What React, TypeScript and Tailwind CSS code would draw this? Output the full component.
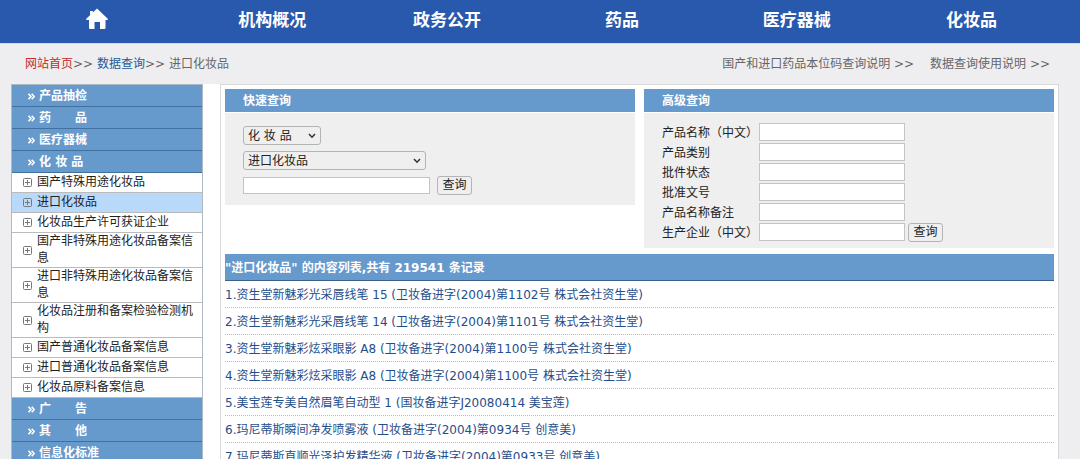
import React from 'react';

const navItems = ['机构概况', '政务公开', '药品', '医疗器械', '化妆品'];

const topGroups = ['产品抽检', '药\u3000\u3000品', '医疗器械', '化 妆 品'];
const bottomGroups = ['广\u3000\u3000告', '其\u3000\u3000他', '信息化标准'];

const categories = [
  '国产特殊用途化妆品',
  '进口化妆品',
  '化妆品生产许可获证企业',
  '国产非特殊用途化妆品备案信息',
  '进口非特殊用途化妆品备案信息',
  '化妆品注册和备案检验检测机构',
  '国产普通化妆品备案信息',
  '进口普通化妆品备案信息',
  '化妆品原料备案信息',
];

const advancedFields = [
  { id: 'name', label: '产品名称（中文）' },
  { id: 'type', label: '产品类别' },
  { id: 'status', label: '批件状态' },
  { id: 'number', label: '批准文号' },
  { id: 'remark', label: '产品名称备注' },
  { id: 'company', label: '生产企业（中文）' },
];

const records = [
  '资生堂新魅彩光采唇线笔 15 (卫妆备进字(2004)第1102号 株式会社资生堂)',
  '资生堂新魅彩光采唇线笔 14 (卫妆备进字(2004)第1101号 株式会社资生堂)',
  '资生堂新魅彩炫采眼影 A8 (卫妆备进字(2004)第1100号 株式会社资生堂)',
  '资生堂新魅彩炫采眼影 A8 (卫妆备进字(2004)第1100号 株式会社资生堂)',
  '美宝莲专美自然眉笔自动型 1 (国妆备进字J20080414 美宝莲)',
  '玛尼蒂斯瞬间净发喷雾液 (卫妆备进字(2004)第0934号 创意美)',
  '玛尼蒂斯直顺光泽护发精华液 (卫妆备进字(2004)第0933号 创意美)',
];

function HomeIcon() {
  return (
    <svg className="w-[22px] h-[22px]" viewBox="0 0 22 22" fill="currentColor" aria-hidden="true">
      <path d="M11 0.5 L22 11 Q22 12 21 12 H19.5 V20 Q19.5 21 18.5 21 H14 V14 H8.5 V21 H4 Q3 21 3 20 V12 H1 Q0 12 0 11 L4 7.3 V3 H6.8 V4.6 Z" />
    </svg>
  );
}

function PlusBox() {
  return (
    <svg className="w-[9px] h-[9px] shrink-0" viewBox="0 0 9 9" fill="none" stroke="#777" aria-hidden="true">
      <rect x="0.5" y="0.5" width="8" height="8" rx="1" />
      <path d="M2 4.5 H7 M4.5 2 V7" />
    </svg>
  );
}

function GroupLink({ text }: { text: string }) {
  return (
    <a href="#" className="flex items-center gap-1 h-[22px] pl-4 pt-px border-b border-[#41719f] bg-[#6699cc] text-white font-bold whitespace-pre">
      <svg className="w-[7px] h-[7px]" viewBox="0 0 7 7" fill="none" stroke="currentColor" strokeWidth="1.6" aria-hidden="true">
        <path d="M0.5 0.8 L3 3.5 L0.5 6.2 M3.7 0.8 L6.2 3.5 L3.7 6.2" />
      </svg>
      {text}
    </a>
  );
}

function Select({ label, text, className }: { label: string; text: string; className: string }) {
  return (
    <div className={`relative ${className}`}>
      <select
        aria-label={label}
        className="block appearance-none w-full h-[19px] pl-1 border border-[#b4b4b4] rounded-[3px] bg-[#efefef] leading-4 text-[#222]">
        <option>{text}</option>
      </select>
      <svg className="absolute right-[5px] top-[7px] w-2 h-[6px] pointer-events-none" viewBox="0 0 8 6" fill="none" stroke="#333" strokeWidth="1.5" aria-hidden="true">
        <path d="M1 1 L4 4.2 L7 1" />
      </svg>
    </div>
  );
}

function QueryButton() {
  return (
    <button type="button" className="w-[35px] h-[19px] shrink-0 border border-[#b4b4b4] rounded-[3px] bg-[#efefef] leading-4 text-[#222]">
      查询
    </button>
  );
}

function Panel({ title, children }: { title: string; children: React.ReactNode }) {
  return (
    <section className="flex-1 min-w-0">
      <h2 className="h-[23px] pl-[18px] bg-[#6699cc] text-white font-bold leading-6">{title}</h2>
      <div className="mt-px pl-[18px] bg-[#efeff0]">{children}</div>
    </section>
  );
}

export default function App() {
  return (
    <div className="h-screen overflow-hidden bg-[#eeeef0] text-xs text-[#222] font-['DejaVu_Sans','Noto_Sans_CJK_SC',sans-serif]">
      <nav className="grid grid-cols-6 items-center h-[43px] pl-[10px] pr-[21px] bg-[#2859ad] text-white text-center text-[17px] leading-6 font-bold">
        <a href="#" aria-label="首页" className="flex justify-center pb-[5px]">
          <HomeIcon />
        </a>
        {navItems.map((item) => (
          <a key={item} href="#" className="pb-[3px]">{item}</a>
        ))}
      </nav>

      <div className="flex justify-between h-[41px] pl-[25px] pr-[30px] border-t border-[#d5dcf0] leading-[41px] text-[#666]">
        <div className="whitespace-pre">
          <a href="#" className="text-[#c52a2a]">网站首页</a>
          {'>> '}
          <a href="#" className="text-[#23589b]">数据查询</a>
          {'>> 进口化妆品'}
        </div>
        <div className="flex gap-4">
          <a href="#">国产和进口药品本位码查询说明 &gt;&gt;</a>
          <a href="#">数据查询使用说明 &gt;&gt;</a>
        </div>
      </div>

      <div className="flex items-start gap-[17px] ml-[11px] mr-[21px] bg-white">
        <aside className="w-48 shrink-0 border border-[#aeb9c4]">
          {topGroups.map((g) => <GroupLink key={g} text={g} />)}
          {categories.map((c) => (
            <a
              key={c}
              href="#"
              className={`flex items-center gap-[5px] min-h-5 pl-[11px] pr-1 border-b border-[#bbb] leading-[17px] ${c === '进口化妆品' ? 'bg-[#b9d9fb]' : 'bg-white'}`}>
              <PlusBox />
              <span>{c}</span>
            </a>
          ))}
          {bottomGroups.map((g) => <GroupLink key={g} text={g} />)}
        </aside>

        <main className="flex-1 min-w-0 px-1 pt-1 border border-[#d8d8d8]">
          <div className="flex items-start gap-[9px]">
            <Panel title="快速查询">
              <div className="flex flex-col gap-[6px] pt-[13px] pb-[11px]">
                <Select label="分类" text="化 妆 品" className="w-[78px]" />
                <Select label="数据库" text="进口化妆品" className="w-[183px]" />
                <div className="flex items-center gap-[7px] h-[18px]">
                  <input type="text" aria-label="关键字" className="w-[187px] h-[17px] px-1 border border-[#c4c4c4] bg-white" />
                  <QueryButton />
                </div>
              </div>
            </Panel>
            <Panel title="高级查询">
              <div className="flex flex-col gap-0.5 pt-[10px] pb-[7px]">
                {advancedFields.map((f) => (
                  <div key={f.id} className="flex items-center h-[18px]">
                    <label htmlFor={f.id} className="w-[97px] shrink-0 pt-0.5 leading-4">{f.label}</label>
                    <input id={f.id} type="text" className="w-[146px] h-[18px] px-1 border border-[#c4c4c4] bg-white" />
                    {f.id === 'company' && <div className="flex pl-[3px]"><QueryButton /></div>}
                  </div>
                ))}
              </div>
            </Panel>
          </div>

          <h2 className="h-[27px] mt-[6px] border-b border-[#39618c] bg-[#6699cc] text-white font-bold leading-7">
            "进口化妆品" 的内容列表,共有 219541 条记录
          </h2>
          <ol>
            {records.map((r, i) => (
              <li key={i} className="h-[27px] border-b border-dotted border-[#bbb] leading-7 whitespace-nowrap">
                <a href="#" className="text-[#1f4e8c]">{i + 1}.{r}</a>
              </li>
            ))}
          </ol>
        </main>
      </div>
    </div>
  );
}
